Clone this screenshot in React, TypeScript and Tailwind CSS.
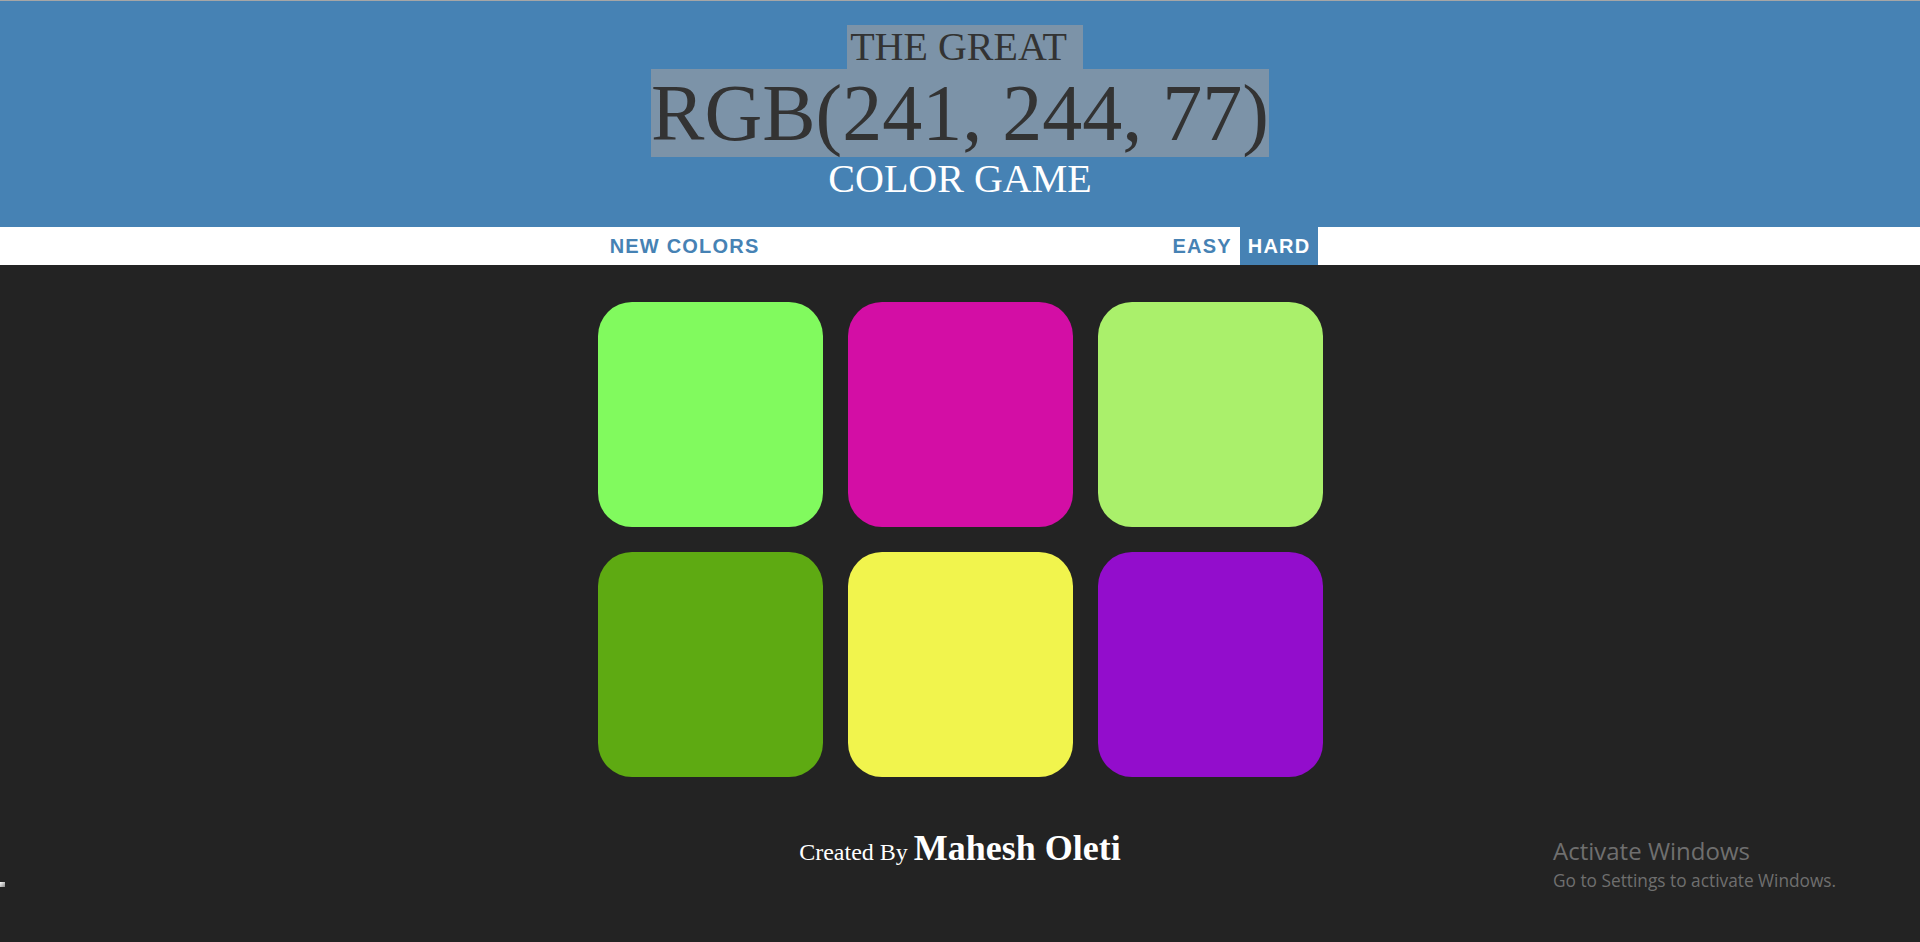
import React from "react";

const squares = ["#81fa5e", "#d30ea5", "#aaf06b", "#5eaa12", "#f1f44d", "#930dcc"];

export default function App() {
  return (
    <div className="relative min-h-screen bg-[#232323] font-['Liberation_Serif',serif]">
      <div className="h-px bg-[#a6a6a6]" />
      <h1 className="bg-[#4682b4] pt-[24px] pb-[26px] text-center font-normal uppercase text-white">
        <span className="ml-[10px] inline-block bg-[#7c93a8] pl-[3px] pr-[16px] text-[40px] leading-[1.1] text-[#333333]">
          The Great
        </span>
        <br />
        <span className="inline-block bg-[#7c93a8] text-[80px] leading-[1.1] text-[#333333]">
          RGB(241, 244, 77)
        </span>
        <br />
        <span className="inline-block text-[40px] leading-[1.1]">Color Game</span>
      </h1>

      <div className="flex h-[38px] justify-center bg-white font-['Liberation_Sans',sans-serif] text-[20px] font-bold uppercase tracking-[1.2px] text-[#4682b4]">
        <button className="h-full px-2 uppercase">New Colors</button>
        <span className="w-[397px]" />
        <button className="h-full px-2 uppercase">Easy</button>
        <button className="h-full bg-[#4682b4] px-2 uppercase text-white">Hard</button>
      </div>

      <div className="mx-auto mt-[24px] grid w-[750px] grid-cols-3 gap-x-[25px] gap-y-[25px] p-[12.5px]">
        {squares.map((c, i) => (
          <div
            key={i}
            className="h-[225px] w-[225px] rounded-[34px]"
            style={{ backgroundColor: c }}
          />
        ))}
      </div>

      <div className="mt-[32px] text-center text-white">
        <span className="text-[24px]">Created By </span>
        <span className="text-[36px] font-bold">Mahesh Oleti</span>
      </div>

      <div className="absolute left-[1553px] top-[836px] font-['Open_Sans',sans-serif] text-[#6f6f6f]">
        <div className="text-[24px] leading-[30px]">Activate Windows</div>
        <div className="text-[17.3px] leading-[30px]">Go to Settings to activate Windows.</div>
      </div>

      <div className="absolute left-0 top-[882px] h-[5px] w-[5px] bg-gradient-to-br from-white to-[#888]" />
    </div>
  );
}
